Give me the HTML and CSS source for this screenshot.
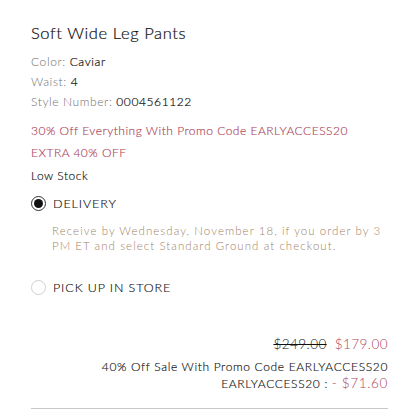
FILE: index.html
```html
<!DOCTYPE html>
<html>
<head>
<meta charset="utf-8">
<link rel="stylesheet" href="styles.css">
</head>
<body>
<div class="page">
  <h1 class="title">Soft Wide Leg Pants</h1>
  <div class="attr"><span class="label">Color:</span> <span class="value">Caviar</span></div>
  <div class="attr"><span class="label">Waist:</span> <span class="value">4</span></div>
  <div class="attr"><span class="label">Style Number:</span> <span class="value">0004561122</span></div>
  <div class="promo promo-first">30% Off Everything With Promo Code EARLYACCESS20</div>
  <div class="promo">EXTRA 40% OFF</div>
  <div class="stock">Low Stock</div>
  <div class="option">
    <span class="radio checked"></span>
    <span class="option-label">DELIVERY</span>
  </div>
  <p class="ship">Receive by Wednesday, November 18, if you order by 3 PM ET and select Standard Ground at checkout.</p>
  <div class="option option-store">
    <span class="radio"></span>
    <span class="option-label">PICK UP IN STORE</span>
  </div>
  <div class="prices">
    <div class="price-row"><span class="old">$249.00</span><span class="new">$179.00</span></div>
    <div class="discount discount-first">40% Off Sale With Promo Code EARLYACCESS20</div>
    <div class="discount">EARLYACCESS20 : <span class="minus">- $71.60</span></div>
  </div>
  <hr class="rule">
</div>
</body>
</html>
```
FILE: styles.css
```css
* { box-sizing: border-box; }
html, body { margin: 0; padding: 0; background: #fff; }
body {
  font-family: Lato, "Open Sans", sans-serif;
  font-weight: 300;
  color: #222;
}
.page {
  padding: 22px 32px 0 31px;
}
.title {
  margin: 0 0 8px;
  font-size: 16.5px;
  font-weight: 300;
  letter-spacing: 0.6px;
  color: #111;
  line-height: 22px;
  -webkit-text-stroke: 0.2px #111;
}
.attr {
  font-size: 12px;
  line-height: 20px;
  letter-spacing: 0.6px;
}
.label { color: #6f6f6f; }
.value { color: #111; -webkit-text-stroke: 0.2px #111; }
.promo {
  color: #ad4459;
  font-size: 12px;
  line-height: 22px;
  letter-spacing: 0.5px;
  -webkit-text-stroke: 0.15px #ad4459;
}
.promo-first { margin-top: 8px; }
.stock {
  font-size: 12px;
  line-height: 20px;
  margin-top: 2px;
  letter-spacing: 0.5px;
  color: #111;
  -webkit-text-stroke: 0.15px #111;
}
.option {
  display: flex;
  align-items: center;
  gap: 7px;
  margin-top: 7px;
  height: 20px;
}
.option-store { margin-top: 24px; }
.radio {
  width: 15px;
  height: 15px;
  border-radius: 50%;
  border: 1px solid #d0d0d0;
  display: inline-flex;
  align-items: center;
  justify-content: center;
}
.radio.checked { border-color: #333; }
.radio.checked::after {
  content: "";
  width: 9px;
  height: 9px;
  border-radius: 50%;
  background: #111;
}
.option-label {
  font-size: 12.5px;
  letter-spacing: 0.9px;
  color: #111;
  -webkit-text-stroke: 0.15px #111;
}
.ship {
  margin: 10px 0 0 21px;
  font-size: 11.5px;
  line-height: 15px;
  letter-spacing: 1.05px;
  color: #a08369;
}
.prices {
  margin-top: 38px;
  text-align: right;
}
.price-row {
  font-size: 13.5px;
  line-height: 18px;
  letter-spacing: 0.45px;
}
.old {
  text-decoration: line-through;
  color: #111;
  margin-right: 8px;
}
.new { color: #ad4459; }
.discount {
  font-size: 12px;
  line-height: 17px;
  letter-spacing: 0.65px;
  color: #111;
  -webkit-text-stroke: 0.15px #111;
}
.discount-first { margin-top: 5px; }
.minus { color: #ad4459; font-size: 13.5px; -webkit-text-stroke: 0; }
.rule {
  margin: 16px 0 0;
  border: 0;
  border-top: 1px solid #c8c8c8;
}
```
